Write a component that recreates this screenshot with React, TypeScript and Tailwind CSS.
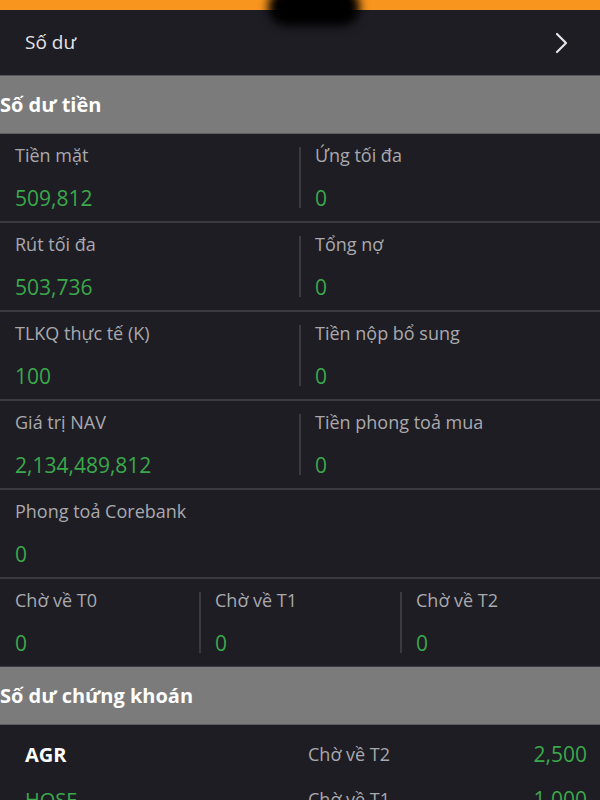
import React from 'react';

const FONT = { fontFamily: '"Open Sans", "Noto Sans", sans-serif' };

const PAIRS = [
    [
        { label: 'Tiền mặt', value: '509,812' },
        { label: 'Ứng tối đa', value: '0' },
    ],
    [
        { label: 'Rút tối đa', value: '503,736' },
        { label: 'Tổng nợ', value: '0' },
    ],
    [
        { label: 'TLKQ thực tế (K)', value: '100' },
        { label: 'Tiền nộp bổ sung', value: '0' },
    ],
    [
        { label: 'Giá trị NAV', value: '2,134,489,812' },
        { label: 'Tiền phong toả mua', value: '0' },
    ],
];

const WAITING = [
    { label: 'Chờ về T0', value: '0' },
    { label: 'Chờ về T1', value: '0' },
    { label: 'Chờ về T2', value: '0' },
];

const STOCKS = [
    { code: 'AGR', codeColor: 'text-white font-bold', status: 'Chờ về T2', qty: '2,500' },
    { code: 'HOSE', codeColor: 'text-[#3aa84b]', status: 'Chờ về T1', qty: '1,000' },
];

function Cell({ label, value, className = '' }: { label: string; value: string; className?: string }) {
    return (
        <div className={`flex flex-col pt-[9px] pb-[9px] ${className}`}>
            <span className="text-[18px] leading-6 text-[#a9a9ad]">{label}</span>
            <span className="mt-[17px] text-[21px] leading-7 text-[#3aa84b]">{value}</span>
        </div>
    );
}

function Divider() {
    return <div className="w-[2px] self-stretch my-[13px] bg-[#3a3a40]" />;
}

function Rule() {
    return <div className="h-[2px] bg-[#3a3a40]" />;
}

function SectionHeader({ title }: { title: string }) {
    return (
        <div className="h-[58px] flex items-center bg-[#7b7b7b] border-b border-[#5e5e60]">
            <span className="text-[20px] font-bold text-white">{title}</span>
        </div>
    );
}

export default function App() {
    return (
        <div className="relative w-[600px] h-[800px] overflow-hidden bg-[#1e1d24]" style={FONT}>
            <div className="h-[10px] bg-[#f7951e]" />
            <div className="absolute left-[268px] top-[-12px] w-[92px] h-[38px] rounded-full bg-black blur-[5px]" />

            <div className="h-[65px] flex items-center justify-between pl-[25px] pr-[30px]">
                <span className="text-[19px] text-[#e4e4e6]">Số dư</span>
                <svg width="16" height="24" viewBox="0 0 16 24" fill="none">
                    <path d="M3 3l9 9-9 9" stroke="#e4e4e6" strokeWidth="2.2" strokeLinecap="round" strokeLinejoin="round" />
                </svg>
            </div>
            <div className="h-px bg-[#55555a]" />

            <SectionHeader title="Số dư tiền" />

            {PAIRS.map((pair, i) => (
                <React.Fragment key={i}>
                    <div className="flex">
                        <Cell {...pair[0]} className="w-[299px] pl-[15px]" />
                        <Divider />
                        <Cell {...pair[1]} className="flex-1 pl-[14px]" />
                    </div>
                    <Rule />
                </React.Fragment>
            ))}

            <div className="flex">
                <Cell label="Phong toả Corebank" value="0" className="flex-1 pl-[15px]" />
            </div>
            <Rule />

            <div className="flex">
                {WAITING.map((w, i) => (
                    <React.Fragment key={w.label}>
                        {i > 0 && <Divider />}
                        <Cell {...w} className={`${i === 0 ? 'w-[199px] pl-[15px]' : i === 1 ? 'w-[199px] pl-[14px]' : 'flex-1 pl-[14px]'}`} />
                    </React.Fragment>
                ))}
            </div>
            <div className="h-px bg-[#3a3a40]" />

            <SectionHeader title="Số dư chứng khoán" />

            <div className="pt-[7px]">
                {STOCKS.map((s) => (
                    <div key={s.code} className="h-[45px] flex items-center pl-[25px] pr-[13px]">
                        <span className={`w-[283px] text-[20px] ${s.codeColor}`}>{s.code}</span>
                        <span className="flex-1 text-[18px] text-[#a9a9ad]">{s.status}</span>
                        <span className="text-[21px] text-[#3aa84b]">{s.qty}</span>
                    </div>
                ))}
            </div>
        </div>
    );
}
